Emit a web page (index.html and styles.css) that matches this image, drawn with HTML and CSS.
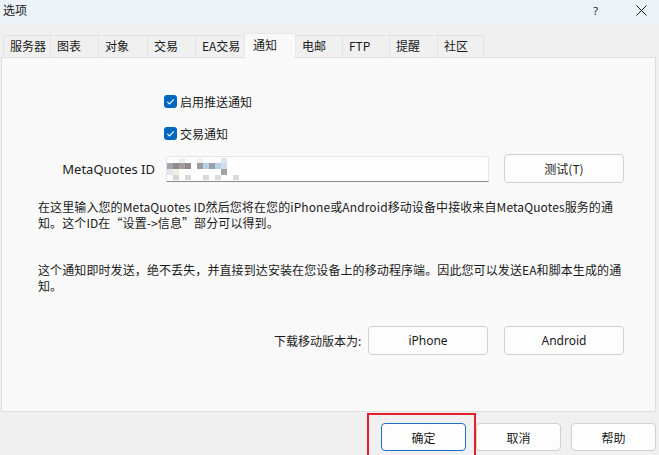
FILE: index.html
```html
<!DOCTYPE html>
<html lang="zh-CN">
<head>
<meta charset="utf-8">
<title>选项</title>
<link rel="stylesheet" href="styles.css">
</head>
<body>
<div class="window">
  <div class="titlebar">
    <span class="title">选项</span>
    <span class="tb-help">?</span>
    <span class="tb-close">
      <svg width="11" height="11" viewBox="0 0 11 11"><path d="M0.5 0.5 L10.5 10.5 M10.5 0.5 L0.5 10.5" stroke="#1a1a1a" stroke-width="1" fill="none"/></svg>
    </span>
  </div>

  <div class="tabs">
    <div class="tab">服务器</div>
    <div class="tab">图表</div>
    <div class="tab">对象</div>
    <div class="tab">交易</div>
    <div class="tab">EA交易</div>
    <div class="tab active">通知</div>
    <div class="tab">电邮</div>
    <div class="tab">FTP</div>
    <div class="tab">提醒</div>
    <div class="tab">社区</div>
  </div>

  <div class="panel">
    <label class="check-row first">
      <span class="checkbox"><svg width="13" height="13" viewBox="0 0 13 13"><path d="M3.3 6.8 L5.5 8.9 L9.8 4.4" stroke="#fff" stroke-width="1.1" fill="none"/></svg></span>
      <span>启用推送通知</span>
    </label>
    <label class="check-row second">
      <span class="checkbox"><svg width="13" height="13" viewBox="0 0 13 13"><path d="M3.3 6.8 L5.5 8.9 L9.8 4.4" stroke="#fff" stroke-width="1.1" fill="none"/></svg></span>
      <span>交易通知</span>
    </label>

    <div class="id-row">
      <span class="id-label">MetaQuotes ID</span>
      <div class="id-input">
        <svg class="blur" width="78" height="24" viewBox="0 0 78 24">
          <rect x="0" y="0" width="78" height="24" fill="#fdfdfd"/>
          <rect x="12" y="1" width="6" height="5" fill="#f1eeee"/>
          <rect x="30" y="1" width="6" height="5" fill="#efefef"/>
          <rect x="54" y="1" width="6" height="5" fill="#dce4ee"/>
          <rect x="0" y="6" width="6" height="6" fill="#a7a3ad"/>
          <rect x="6" y="6" width="6" height="6" fill="#8e8a90"/>
          <rect x="12" y="6" width="6" height="6" fill="#a69b97"/>
          <rect x="18" y="6" width="6" height="6" fill="#8f8a8e"/>
          <rect x="30" y="6" width="6" height="6" fill="#9c9b9f"/>
          <rect x="36" y="6" width="6" height="6" fill="#b5cde6"/>
          <rect x="42" y="6" width="6" height="6" fill="#9aa0aa"/>
          <rect x="48" y="6" width="6" height="6" fill="#b6d0ea"/>
          <rect x="54" y="6" width="6" height="6" fill="#d4dbe4"/>
          <rect x="54" y="12" width="6" height="6" fill="#a2a0a6"/>
          <rect x="0" y="12" width="6" height="6" fill="#e8e6ea"/>
          <rect x="6" y="12" width="6" height="6" fill="#f4efe4"/>
          <rect x="6" y="18" width="6" height="5" fill="#d6d6d6"/>
          <rect x="18" y="18" width="6" height="5" fill="#d8d8d8"/>
          <rect x="36" y="18" width="6" height="5" fill="#d9d9d9"/>
          <rect x="48" y="18" width="6" height="5" fill="#dcdcdc"/>
          <rect x="66" y="18" width="6" height="5" fill="#dadada"/>
        </svg>
      </div>
      <button class="btn test-btn">测试(T)</button>
    </div>

    <p class="para para1">在这里输入您的MetaQuotes ID然后您将在您的iPhone或Android移动设备中接收来自MetaQuotes服务的通<br>知。这个ID在“设置-&gt;信息”部分可以得到。</p>
    <p class="para para2">这个通知即时发送，绝不丢失，并直接到达安装在您设备上的移动程序端。因此您可以发送EA和脚本生成的通<br>知。</p>

    <div class="dl-row">
      <span class="dl-label">下载移动版本为:</span>
      <button class="btn dl-btn">iPhone</button>
      <button class="btn dl-btn">Android</button>
    </div>
  </div>

  <div class="footer">
    <button class="btn foot-btn default">确定</button>
    <button class="btn foot-btn">取消</button>
    <button class="btn foot-btn">帮助</button>
    <div class="highlight"></div>
  </div>
</div>
</body>
</html>
```

FILE: styles.css
```css
* { box-sizing: border-box; }

html, body {
  margin: 0;
  padding: 0;
  background: #f0f0f0;
}

body {
  font-family: "Noto Sans", "Noto Sans CJK SC", sans-serif;
  font-size: 12px;
  color: #1a1a1a;
}

.window {
  width: 659px;
  height: 455px;
  position: relative;
  overflow: hidden;
}

.titlebar {
  height: 23px;
  background: #ebf3f9;
  display: flex;
  align-items: center;
  padding-left: 3px;
  padding-bottom: 7px;
}

.title {
  font-family: "Noto Sans CJK SC", sans-serif;
  font-size: 12px;
  line-height: 16px;
  margin-top: 4px;
}

.tb-help {
  margin-left: auto;
  font-size: 11px;
  margin-right: 38px;
  margin-top: 4px;
}

.tb-close {
  display: flex;
  margin-right: 12px;
  margin-top: 4px;
}

.tabs {
  display: flex;
  padding-left: 3px;
  margin-top: 12px;
  height: 22px;
  position: relative;
  z-index: 2;
}

.tab {
  height: 22px;
  border: 1px solid #e3e3e3;
  border-bottom: none;
  margin-right: -1px;
  background: #f0f0f0;
  font-family: "Noto Sans CJK SC", sans-serif;
  line-height: 20px;
  padding-left: 6px;
}

.tab:nth-child(1) { width: 48px; }
.tab:nth-child(2) { width: 49px; }
.tab:nth-child(3) { width: 50px; }
.tab:nth-child(4) { width: 49px; }
.tab:nth-child(5) { width: 50px; }
.tab:nth-child(6) { width: 52px; }
.tab:nth-child(7) { width: 48px; }
.tab:nth-child(8) { width: 48px; }
.tab:nth-child(9) { width: 49px; }
.tab:nth-child(10) { width: 47px; }

.tab.active {
  background: #f9f9f9;
  height: 25px;
  margin-top: -2px;
  line-height: 22px;
  border-color: #e8e8e8;
  position: relative;
  z-index: 3;
  padding-left: 8px;
}

.panel {
  margin-left: 1px;
  margin-right: 3px;
  height: 355px;
  border: 1px solid #dfdfdf;
  background: #f9f9f9;
  padding-top: 35px;
}

.check-row {
  display: flex;
  align-items: center;
  gap: 3px;
  height: 16px;
  margin-left: 162px;
  font-family: "Noto Sans CJK SC", sans-serif;
}

.check-row.second { margin-top: 16px; }

.checkbox {
  width: 13px;
  height: 13px;
  border-radius: 3px;
  background: #0067c0;
  display: flex;
}

.id-row {
  display: flex;
  align-items: center;
  margin-top: 13px;
  height: 29px;
}

.id-label {
  width: 153px;
  text-align: right;
  font-size: 13px;
}

.id-input {
  margin-left: 11px;
  width: 323px;
  height: 26px;
  background: #fdfdfd;
  border: 1px solid #e5e5e5;
  border-bottom: 1px solid #8a8a8a;
  border-radius: 3px 3px 0 0;
  display: flex;
  align-items: center;
}

.blur { display: block; }

.btn {
  font-family: "Noto Sans", "Noto Sans CJK SC", sans-serif;
  font-size: 12px;
  color: #1a1a1a;
  background: #fdfdfd;
  border: 1px solid #d0d0d0;
  border-radius: 4px;
  padding: 0;
  height: 29px;
  width: 120px;
}

.test-btn {
  margin-left: 15px;
  font-family: "Noto Sans CJK SC", sans-serif;
}

.para {
  margin: 0;
  margin-left: 36px;
  line-height: 16px;
  font-family: "Noto Sans CJK SC", sans-serif;
  font-size: 12px;
  white-space: nowrap;
  letter-spacing: 0.1px;
}

.para1 { margin-top: 16px; }
.para2 { margin-top: 31px; }

.dl-row {
  display: flex;
  align-items: center;
  margin-top: 32px;
  height: 29px;
}

.dl-label {
  margin-left: 272px;
  width: 94px;
  font-family: "Noto Sans CJK SC", sans-serif;
}

.dl-btn + .dl-btn { margin-left: 16px; }

.footer {
  display: flex;
  justify-content: flex-end;
  gap: 10px;
  padding-right: 3px;
  margin-top: 11px;
  position: relative;
}

.foot-btn {
  width: 85px;
  height: 28px;
  font-family: "Noto Sans CJK SC", sans-serif;
}

.foot-btn.default {
  border-color: #1e6fbf;
}

.highlight {
  position: absolute;
  left: 367px;
  top: -10px;
  width: 109px;
  height: 52px;
  border: 2px solid #e3202c;
  pointer-events: none;
}
```
